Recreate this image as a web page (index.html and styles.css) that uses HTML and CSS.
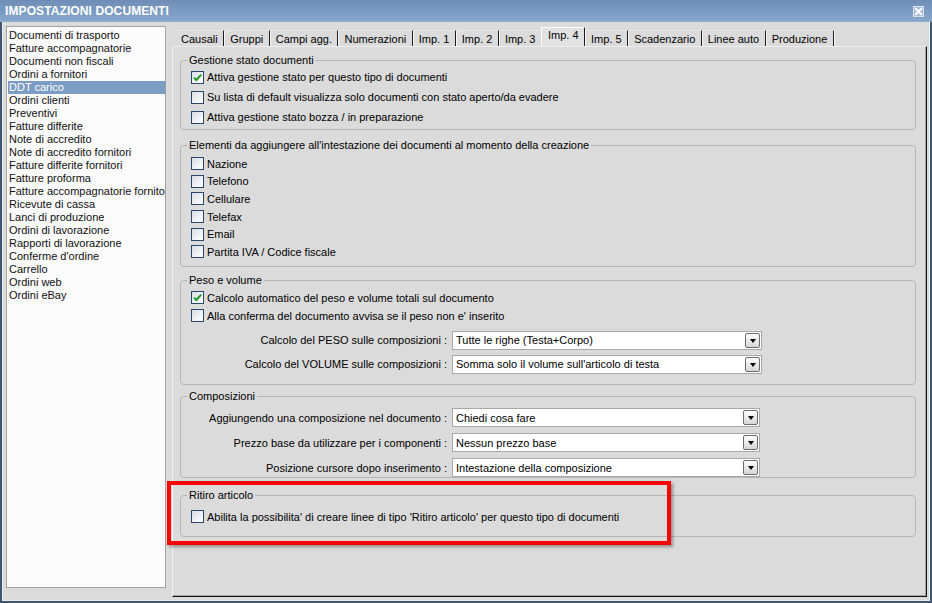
FILE: index.html
```html
<!DOCTYPE html>
<html lang="it">
<head>
<meta charset="utf-8">
<title>Impostazioni documenti</title>
<link rel="stylesheet" href="styles.css">
</head>
<body>
<div class="window">
  <div class="titlebar">
    <span class="title">IMPOSTAZIONI DOCUMENTI</span>
    <span class="close">
      <svg width="11" height="11" viewBox="0 0 11 11"><rect x="0.5" y="0.5" width="10" height="10" fill="#a7bcd6" stroke="#d9e3ef"/><path d="M2.8 2.8 L8.2 8.2 M8.2 2.8 L2.8 8.2" stroke="#fff" stroke-width="2" stroke-linecap="square"/></svg>
    </span>
  </div>
  <div class="body">
    <ul class="doclist">
      <li>Documenti di trasporto</li>
      <li>Fatture accompagnatorie</li>
      <li>Documenti non fiscali</li>
      <li>Ordini a fornitori</li>
      <li class="selected">DDT carico</li>
      <li>Ordini clienti</li>
      <li>Preventivi</li>
      <li>Fatture differite</li>
      <li>Note di accredito</li>
      <li>Note di accredito fornitori</li>
      <li>Fatture differite fornitori</li>
      <li>Fatture proforma</li>
      <li>Fatture accompagnatorie fornitori</li>
      <li>Ricevute di cassa</li>
      <li>Lanci di produzione</li>
      <li>Ordini di lavorazione</li>
      <li>Rapporti di lavorazione</li>
      <li>Conferme d'ordine</li>
      <li>Carrello</li>
      <li>Ordini web</li>
      <li>Ordini eBay</li>
    </ul>
    <div class="tabcol">
      <div class="tabstrip">
        <div class="tab">Causali</div>
        <div class="tab">Gruppi</div>
        <div class="tab">Campi agg.</div>
        <div class="tab">Numerazioni</div>
        <div class="tab">Imp. 1</div>
        <div class="tab">Imp. 2</div>
        <div class="tab before-active">Imp. 3</div>
        <div class="tab active">Imp. 4</div>
        <div class="tab">Imp. 5</div>
        <div class="tab">Scadenzario</div>
        <div class="tab">Linee auto</div>
        <div class="tab">Produzione</div>
      </div>
      <div class="panel">
        <fieldset class="group g1">
          <legend>Gestione stato documenti</legend>
          <div class="rows">
            <label class="chk"><span class="box checked"><svg width="11" height="11" viewBox="0 0 11 11"><path d="M2 5.6 L4.4 8 L9.2 2.6" fill="none" stroke="#1f9a25" stroke-width="2"/></svg></span>Attiva gestione stato per questo tipo di documenti</label>
            <label class="chk"><span class="box"></span>Su lista di default visualizza solo documenti con stato aperto/da evadere</label>
            <label class="chk"><span class="box"></span>Attiva gestione stato bozza / in preparazione</label>
          </div>
        </fieldset>

        <fieldset class="group g2">
          <legend>Elementi da aggiungere all'intestazione dei documenti al momento della creazione</legend>
          <div class="rows">
            <label class="chk"><span class="box"></span>Nazione</label>
            <label class="chk"><span class="box"></span>Telefono</label>
            <label class="chk"><span class="box"></span>Cellulare</label>
            <label class="chk"><span class="box"></span>Telefax</label>
            <label class="chk"><span class="box"></span>Email</label>
            <label class="chk"><span class="box"></span>Partita IVA / Codice fiscale</label>
          </div>
        </fieldset>

        <fieldset class="group g3">
          <legend>Peso e volume</legend>
          <div class="rows">
            <label class="chk"><span class="box checked"><svg width="11" height="11" viewBox="0 0 11 11"><path d="M2 5.6 L4.4 8 L9.2 2.6" fill="none" stroke="#1f9a25" stroke-width="2"/></svg></span>Calcolo automatico del peso e volume totali sul documento</label>
            <label class="chk"><span class="box"></span>Alla conferma del documento avvisa se il peso non e' inserito</label>
            <div class="fields">
              <div class="field"><span class="flabel">Calcolo del PESO sulle composizioni :</span><span class="combo"><span class="ctext">Tutte le righe (Testa+Corpo)</span><span class="cbtn"><span class="tri"></span></span></span></div>
              <div class="field"><span class="flabel">Calcolo del VOLUME sulle composizioni :</span><span class="combo"><span class="ctext">Somma solo il volume sull'articolo di testa</span><span class="cbtn"><span class="tri"></span></span></span></div>
            </div>
          </div>
        </fieldset>

        <fieldset class="group g4">
          <legend>Composizioni</legend>
          <div class="rows">
            <div class="fields">
              <div class="field"><span class="flabel">Aggiungendo una composizione nel documento :</span><span class="combo narrow"><span class="ctext">Chiedi cosa fare</span><span class="cbtn"><span class="tri"></span></span></span></div>
              <div class="field"><span class="flabel">Prezzo base da utilizzare per i componenti :</span><span class="combo narrow"><span class="ctext">Nessun prezzo base</span><span class="cbtn"><span class="tri"></span></span></span></div>
              <div class="field"><span class="flabel">Posizione cursore dopo inserimento :</span><span class="combo narrow"><span class="ctext">Intestazione della composizione</span><span class="cbtn"><span class="tri"></span></span></span></div>
            </div>
          </div>
        </fieldset>

        <fieldset class="group g5">
          <legend>Ritiro articolo</legend>
          <div class="rows">
            <label class="chk"><span class="box"></span>Abilita la possibilita' di creare linee di tipo 'Ritiro articolo' per questo tipo di documenti</label>
          </div>
        </fieldset>
      </div>
    </div>
  </div>
  <div class="highlight"></div>
</div>
</body>
</html>
```

FILE: styles.css
```css
* { box-sizing: border-box; }

html, body {
  margin: 0;
  padding: 0;
}

body {
  width: 932px;
  height: 603px;
  overflow: hidden;
  font-family: "Liberation Sans", Arial, sans-serif;
  font-size: 11px;
  color: #000;
  background: #dbdbdb;
}

.window {
  position: relative;
  width: 932px;
  height: 603px;
  display: flex;
  flex-direction: column;
  background: #dbdbdb;
}

/* title bar */
.titlebar {
  height: 22px;
  flex: none;
  display: flex;
  align-items: center;
  justify-content: space-between;
  padding: 0 8px 0 5px;
  background: linear-gradient(#6e8eb7, #87a6cb);
  border-bottom: 1px solid #93afd0;
}

.title {
  color: #fff;
  font-weight: bold;
  font-size: 12px;
  letter-spacing: 0.1px;
  padding-top: 1px;
}

.close {
  display: flex;
  margin-top: 1px;
}

/* body */
.body {
  flex: 1;
  display: flex;
  gap: 6px;
  padding: 4px 3px 4px 4px;
  border: 2px solid #3f5672;
  border-top: 0;
  box-shadow: inset 1px 0 #ececec, inset -1px 0 #ececec, inset 0 -1px #ececec;
  min-height: 0;
}

/* document list */
.doclist {
  width: 160px;
  height: 562px;
  flex: none;
  margin: 0;
  padding: 2px 0 0 0;
  list-style: none;
  background: #fbfbfb;
  border: 1px solid #a2a2a2;
  overflow: hidden;
}

.doclist li {
  height: 13px;
  line-height: 13px;
  margin-left: 1px;
  padding-left: 1px;
  white-space: nowrap;
  overflow: hidden;
  color: #111;
}

.doclist li.selected {
  background: #7c9dc3;
  color: #fff;
}

/* tabs */
.tabcol {
  flex: 1;
  display: flex;
  flex-direction: column;
  min-width: 0;
}

.tabstrip {
  height: 20px;
  flex: none;
  display: flex;
  align-items: flex-end;
  padding-left: 3px;
}

.tab {
  height: 16px;
  line-height: 16px;
  padding: 0 5.5px 0 6px;
  border-right: 1px solid #1c1c1c;
  box-shadow: 1px 0 0 #f6f6f6;
  border-top: 1px solid #e6e6e6;
  white-space: nowrap;
}

.tab.before-active {
  border-right-color: transparent;
  box-shadow: none;
}

.tab.active {
  height: 19px;
  line-height: 15px;
  background: #e2e2e2;
  border-top: 1px solid #fdfdfd;
  border-left: 1px solid #fdfdfd;
  margin-left: -1px;
}

/* panel */
.panel {
  flex: 1;
  border-left: 1px solid #f2f2f2;
  border-top: 1px solid #eeeeee;
  border-right: 1px solid #111;
  border-bottom: 1px solid #111;
  box-shadow: inset -1px -1px 0 #a4a4a4;
  padding: 7px 10px 0 7px;
}

.group {
  margin: 0;
  padding: 0;
  border: 1px solid #b5b5b5;
  border-radius: 4px;
  min-width: 0;
}

.group legend {
  margin-left: 6px;
  padding: 0 2px;
  line-height: 13px;
}

.rows {
  padding-left: 10px;
}

.chk {
  display: flex;
  align-items: center;
  height: 20px;
  white-space: nowrap;
}

.box {
  width: 13px;
  height: 13px;
  flex: none;
  margin-right: 3px;
  border: 1px solid #29476a;
  background: linear-gradient(135deg, #d8dee6 0%, #eef1f4 55%, #ffffff 100%);
  display: flex;
  align-items: center;
  justify-content: center;
}

.g1 .rows { padding-top: 0; padding-bottom: 2px; }

.g2 { margin-top: 9px; }
.g2 .rows { padding-top: 3px; padding-bottom: 5px; }
.g2 .chk { height: 17.6px; }

.g3 { margin-top: 7px; }
.g3 .rows { padding-top: 2px; padding-bottom: 10px; }
.g3 .chk { height: 18px; }
.g3 .fields { margin-top: 6px; }

.g4 { margin-top: 5px; }
.g4 .rows { padding-top: 5.5px; padding-bottom: 0; }
.g4 .fields { gap: 6px; }

.g5 { margin-top: 11px; }
.g5 .rows { padding-top: 5.5px; padding-bottom: 10.5px; }
.g5 .chk { height: 18px; }

.fields {
  display: flex;
  flex-direction: column;
  gap: 5px;
  margin-left: -10px;
}

.field {
  display: flex;
  align-items: center;
  height: 19px;
}

.flabel {
  width: 271px;
  flex: none;
  text-align: right;
  padding-right: 5px;
  white-space: nowrap;
}

.combo {
  width: 310px;
  height: 19px;
  display: flex;
  align-items: center;
  justify-content: space-between;
  background: #fff;
  border: 1px solid #a9a9a9;
  padding-left: 3px;
  padding-right: 1px;
}

.combo.narrow { width: 308px; }

.ctext {
  white-space: nowrap;
}

.cbtn {
  width: 15px;
  height: 15px;
  border: 1px solid #6c6c6c;
  border-radius: 2px;
  background: linear-gradient(#fdfdfd, #d6d6d6);
  display: flex;
  align-items: center;
  justify-content: center;
}

.tri {
  width: 0;
  height: 0;
  border-left: 3.5px solid transparent;
  border-right: 3.5px solid transparent;
  border-top: 4px solid #000;
  margin-top: 1px;
}

/* red annotation overlay */
.highlight {
  position: absolute;
  left: 167px;
  top: 481px;
  width: 504px;
  height: 64px;
  border: 4px solid #ff0000;
  box-shadow: 2px 2px 3px rgba(0, 0, 0, 0.35);
  pointer-events: none;
}
```
